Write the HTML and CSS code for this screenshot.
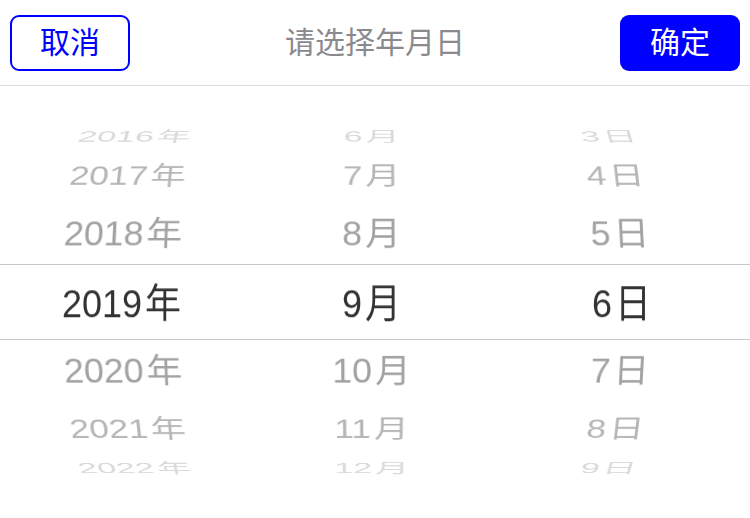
FILE: index.html
```html
<!DOCTYPE html>
<html lang="zh-CN">
<head>
<meta charset="utf-8">
<title>请选择年月日</title>
<link rel="stylesheet" href="styles.css">
</head>
<body>
<div class="sheet">
  <header class="bar">
    <button class="btn btn-cancel">取消</button>
    <h1 class="title">请选择年月日</h1>
    <button class="btn btn-ok">确定</button>
  </header>
  <div class="picker">
    <div class="col">
      <div class="item up3">2016<span class="unit">年</span></div>
      <div class="item up2">2017<span class="unit">年</span></div>
      <div class="item up1">2018<span class="unit">年</span></div>
      <div class="item sel">2019<span class="unit">年</span></div>
      <div class="item down1">2020<span class="unit">年</span></div>
      <div class="item down2">2021<span class="unit">年</span></div>
      <div class="item down3">2022<span class="unit">年</span></div>
    </div>
    <div class="col">
      <div class="item up3">6<span class="unit">月</span></div>
      <div class="item up2">7<span class="unit">月</span></div>
      <div class="item up1">8<span class="unit">月</span></div>
      <div class="item sel">9<span class="unit">月</span></div>
      <div class="item down1">10<span class="unit">月</span></div>
      <div class="item down2">11<span class="unit">月</span></div>
      <div class="item down3">12<span class="unit">月</span></div>
    </div>
    <div class="col">
      <div class="item up3">3<span class="unit">日</span></div>
      <div class="item up2">4<span class="unit">日</span></div>
      <div class="item up1">5<span class="unit">日</span></div>
      <div class="item sel">6<span class="unit">日</span></div>
      <div class="item down1">7<span class="unit">日</span></div>
      <div class="item down2">8<span class="unit">日</span></div>
      <div class="item down3">9<span class="unit">日</span></div>
    </div>
    <div class="indicator"></div>
  </div>
</div>
</body>
</html>
```

FILE: styles.css
```css
html, body {
  margin: 0;
  background: #fff;
}

body {
  font-family: "Liberation Sans", "Noto Sans CJK SC", sans-serif;
  width: 750px;
  height: 518px;
  overflow: hidden;
}

.bar {
  height: 85px;
  border-bottom: 1px solid #dedede;
  display: flex;
  align-items: center;
  justify-content: space-between;
  padding: 0 10px;
}

.btn {
  width: 120px;
  height: 56px;
  box-sizing: border-box;
  border-radius: 9px;
  font-family: "Noto Sans CJK SC", sans-serif;
  font-size: 30px;
  line-height: 1;
  padding: 0 0 6px;
  margin: 0;
}

.btn-cancel {
  background: #fff;
  border: 2px solid #0000ff;
  color: #0000ff;
}

.btn-ok {
  background: #0000ff;
  border: 0;
  color: #fff;
}

.title {
  margin: 0 0 6px;
  font-family: "Noto Sans CJK SC", sans-serif;
  font-size: 30px;
  line-height: 1;
  font-weight: normal;
  color: #8a8a8e;
}

.picker {
  position: relative;
  height: 432px;
  display: grid;
  grid-template-columns: repeat(3, 1fr);
  perspective: 1845px;
  perspective-origin: 50% 50%;
}

.col {
  display: grid;
  transform-style: preserve-3d;
}

.item {
  grid-area: 1 / 1;
  align-self: center;
  height: 75px;
  line-height: 75px;
  padding-right: 7px;
  text-align: center;
  font-size: 36px;
  color: #a2a2a2;
  white-space: nowrap;
  transform: translateZ(-202px) rotateX(var(--a)) translateZ(202px);
}

.unit {
  margin-left: 3px;
}

.up1 { --a: 20deg; }
.up2 { --a: 40deg; color: #b6b6b6; }
.up3 { --a: 60deg; color: #dadada; }
.down1 { --a: -20deg; }
.down2 { --a: -40deg; color: #b6b6b6; }
.down3 { --a: -60deg; color: #dadada; }

.sel {
  color: #333;
  transform: translateY(1px) scaleY(1.1);
}

.indicator {
  position: absolute;
  left: 0;
  right: 0;
  top: 178px;
  height: 76px;
  box-sizing: border-box;
  border-top: 1px solid #c8c8c8;
  border-bottom: 1px solid #c8c8c8;
  pointer-events: none;
}
```
